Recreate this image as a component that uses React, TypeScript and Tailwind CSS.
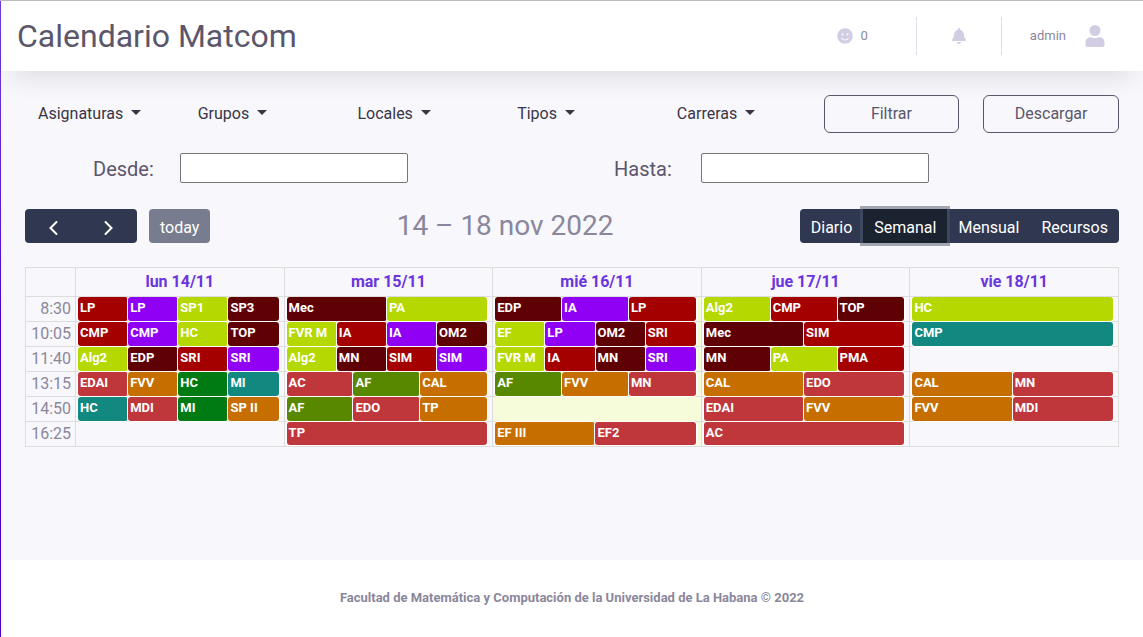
import { FaBell, FaSmile } from "react-icons/fa";

const red = "bg-[#a40000]";
const violet = "bg-[#9000f5]";
const lime = "bg-[#b5d900]";
const maroon = "bg-[#5f0005]";
const rose = "bg-[#bf363b]";
const orange = "bg-[#c66f00]";
const green = "bg-[#007a12]";
const teal = "bg-[#118980]";
const olive = "bg-[#588700]";

type Lesson = [name: string, color: string];

const days = ["lun 14/11", "mar 15/11", "mié 16/11", "jue 17/11", "vie 18/11"];
const todayIndex = 2;

const schedule: { time: string; lessons: Lesson[][] }[] = [
  {
    time: "8:30",
    lessons: [
      [["LP", red], ["LP", violet], ["SP1", lime], ["SP3", maroon]],
      [["Mec", maroon], ["PA", lime]],
      [["EDP", maroon], ["IA", violet], ["LP", red]],
      [["Alg2", lime], ["CMP", red], ["TOP", maroon]],
      [["HC", lime]],
    ],
  },
  {
    time: "10:05",
    lessons: [
      [["CMP", red], ["CMP", violet], ["HC", lime], ["TOP", maroon]],
      [["FVR M", lime], ["IA", red], ["IA", violet], ["OM2", maroon]],
      [["EF", lime], ["LP", violet], ["OM2", maroon], ["SRI", red]],
      [["Mec", maroon], ["SIM", red]],
      [["CMP", teal]],
    ],
  },
  {
    time: "11:40",
    lessons: [
      [["Alg2", lime], ["EDP", maroon], ["SRI", red], ["SRI", violet]],
      [["Alg2", lime], ["MN", maroon], ["SIM", red], ["SIM", violet]],
      [["FVR M", lime], ["IA", red], ["MN", maroon], ["SRI", violet]],
      [["MN", maroon], ["PA", lime], ["PMA", red]],
      [],
    ],
  },
  {
    time: "13:15",
    lessons: [
      [["EDAI", rose], ["FVV", orange], ["HC", green], ["MI", teal]],
      [["AC", rose], ["AF", olive], ["CAL", orange]],
      [["AF", olive], ["FVV", orange], ["MN", rose]],
      [["CAL", orange], ["EDO", rose]],
      [["CAL", orange], ["MN", rose]],
    ],
  },
  {
    time: "14:50",
    lessons: [
      [["HC", teal], ["MDI", rose], ["MI", green], ["SP II", orange]],
      [["AF", olive], ["EDO", rose], ["TP", orange]],
      [],
      [["EDAI", rose], ["FVV", orange]],
      [["FVV", orange], ["MDI", rose]],
    ],
  },
  {
    time: "16:25",
    lessons: [
      [],
      [["TP", rose]],
      [["EF III", orange], ["EF2", rose]],
      [["AC", rose]],
      [],
    ],
  },
];

const filters = ["Asignaturas", "Grupos", "Locales", "Tipos", "Carreras"];

function Header() {
  return (
    <header className="flex h-[70px] items-center justify-between bg-white pl-4 pr-[38px] shadow-[0_16px_26px_-10px_rgba(0,0,0,0.11)]">
      <h1 className="text-[32px] leading-10 text-[#5b566b]">Calendario Matcom</h1>
      <div className="flex items-center text-[13px] text-[#8b879b]">
        <span className="flex items-center gap-2">
          <FaSmile className="size-4 text-[#d2cde2]" />0
        </span>
        <span className="ml-12 h-[38px] w-px bg-[#e0dcee]" />
        <button type="button" aria-label="Notificaciones" className="flex w-[84px] justify-center">
          <FaBell className="size-4 text-[#d2cde2]" />
        </button>
        <span className="h-[38px] w-px bg-[#e0dcee]" />
        <button type="button" className="ml-7 flex items-center gap-[19px]">
          admin
          <svg viewBox="0 0 20 22" className="h-[22px] w-5 text-[#d2cde2]" fill="currentColor" aria-hidden="true">
            <circle cx="10" cy="5.500" r="5.500" />
            <path d="M5.500 12.200C7 12.200 8 13 10 13s3-.8 4.500-.8c3.200 0 5 2.300 5 5.300V20c0 1.200-.8 2-2 2h-15c-1.200 0-2-.8-2-2v-2.500c0-3 1.800-5.300 5-5.300z" />
          </svg>
        </button>
      </div>
    </header>
  );
}

function Filters() {
  return (
    <div className="grid grid-cols-7 gap-6">
      {filters.map((name) => (
        <button key={name} type="button" className="flex h-[38px] items-center gap-2 pl-[13px] text-[#393546]">
          {name}
          <svg viewBox="0 0 10 5" className="mb-[3px] h-[5px] w-[10px]" fill="currentColor" aria-hidden="true">
            <path d="M0 0h10L5 5z" />
          </svg>
        </button>
      ))}
      {["Filtrar", "Descargar"].map((name) => (
        <button key={name} type="button" className="h-[38px] rounded-[6px] border border-[#5b566b] text-[#5b566b]">
          {name}
        </button>
      ))}
    </div>
  );
}

function DateRange() {
  return (
    <div className="mt-5 grid grid-cols-2 pl-[52px]">
      {["Desde", "Hasta"].map((name) => (
        <div key={name} className="flex items-end pl-4">
          <label htmlFor={name} className="w-[87px] text-xl leading-7 text-[#5b566b]">
            {name}:
          </label>
          <input id={name} type="text" className="h-[30px] w-[228px] rounded-[2px] border border-[#767676] bg-white px-1" />
        </div>
      ))}
    </div>
  );
}

function Toolbar() {
  return (
    <div className="mt-[26px] flex items-center justify-between">
      <div className="flex gap-3 text-white">
        <div className="flex overflow-hidden rounded bg-[#2f3850]">
          <button type="button" aria-label="Anterior" className="flex h-[34px] w-14 items-center justify-center pt-1">
            <svg viewBox="0 0 16 16" className="size-4" fill="none" stroke="currentColor" strokeWidth="2" strokeLinecap="round">
              <path d="M11.500 2 5.500 8l6 6" />
            </svg>
          </button>
          <button type="button" aria-label="Siguiente" className="flex h-[34px] w-14 items-center justify-center pt-1">
            <svg viewBox="0 0 16 16" className="size-4" fill="none" stroke="currentColor" strokeWidth="2" strokeLinecap="round">
              <path d="m4.500 2 6 6-6 6" />
            </svg>
          </button>
        </div>
        <button type="button" className="h-[34px] rounded bg-[#777d8f] px-[11px] pt-1">
          today
        </button>
      </div>
      <h2 className="text-[28px] leading-[34px] text-[#8b879b]">14 – 18 nov 2022</h2>
      <div className="flex rounded bg-[#2f3850] text-white">
        <button type="button" className="h-[34px] px-[11px] pt-1">Diario</button>
        <button type="button" className="h-[34px] bg-[#1c2330] px-[11px] pt-1 shadow-[0_0_0_3px_rgba(76,85,106,0.5)]">
          Semanal
        </button>
        <button type="button" className="h-[34px] px-[11px] pt-1">Mensual</button>
        <button type="button" className="h-[34px] px-[11px] pt-1">Recursos</button>
      </div>
    </div>
  );
}

function Calendar() {
  return (
    <table className="mt-6 w-full table-fixed border-collapse">
      <thead>
        <tr>
          <th className="w-[50px] border border-[#dddddd]" />
          {days.map((day) => (
            <th key={day} className="border border-[#dddddd] p-0 text-base leading-7 font-bold text-[#6a35dd]">
              {day}
            </th>
          ))}
        </tr>
      </thead>
      <tbody>
        {schedule.map(({ time, lessons }, row) => (
          <tr key={time}>
            <th scope="row" className="border border-[#dddddd] p-0 pr-1 text-right text-base leading-6 font-normal text-[#8b879b]">
              {time}
            </th>
            {lessons.map((cell, col) => (
              <td key={col} className={col === todayIndex ? "border border-[#dddddd] bg-[#f6fbda] p-0" : "border border-[#dddddd] p-0"}>
                <div className={row === 0 ? "flex h-6 overflow-hidden pr-[5px] pl-0.5" : row === 5 ? "flex h-6 pr-[5px] pb-px pl-0.5" : "flex h-6 pr-[5px] pl-0.5"}>
                  {cell.map(([name, color], i) => (
                    <div
                      key={i}
                      className={`${color} min-w-0 flex-1 rounded-[3px] pt-px pl-0.5 text-[13px] leading-5 font-bold whitespace-nowrap text-white shadow-[0_0_0_1px_#fff]`}
                    >
                      {name}
                    </div>
                  ))}
                </div>
              </td>
            ))}
          </tr>
        ))}
      </tbody>
    </table>
  );
}

export default function App() {
  return (
    <div className="flex min-h-screen border-t border-[#bbbbbb] bg-[#f8f7fc] font-[Roboto,sans-serif] text-base">
      <div className="w-px shrink-0 bg-linear-to-b from-[#6f3be0] to-[#5000c8] to-50%" />
      <div className="flex min-w-0 flex-1 flex-col">
        <Header />
        <main className="flex-1 px-6 pt-6 pb-8">
          <Filters />
          <DateRange />
          <Toolbar />
          <Calendar />
        </main>
        <footer className="flex h-[77px] items-center justify-center bg-white pb-0.5 text-[13px] font-bold text-[#8b879b]">
          Facultad de Matemática y Computación de la Universidad de La Habana © 2022
        </footer>
      </div>
    </div>
  );
}
